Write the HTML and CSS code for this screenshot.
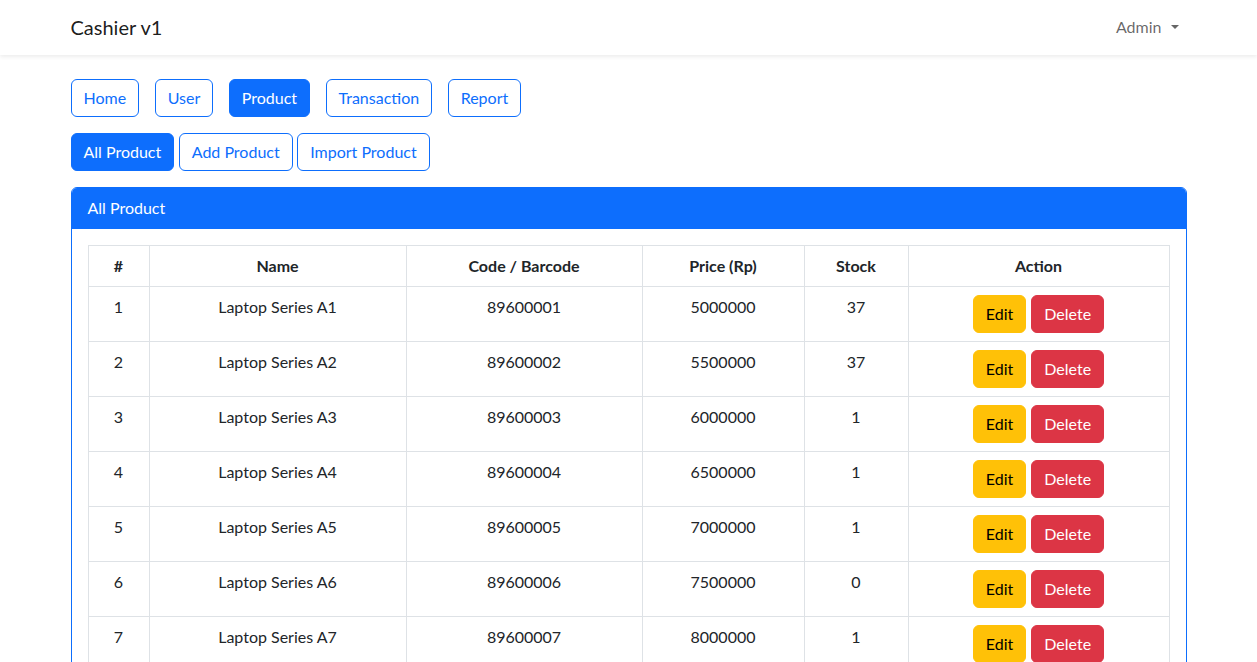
FILE: index.html
```html
<!DOCTYPE html>
<html>
<head>
<meta charset="utf-8">
<link rel="stylesheet" href="styles.css">
</head>
<body>
<nav class="navbar">
  <div class="container nav-inner">
    <a class="brand">Cashier v1</a>
    <a class="dropdown">Admin <span class="caret"></span></a>
  </div>
</nav>
<main class="container">
  <div class="menu">
    <a class="btn outline">Home</a>
    <a class="btn outline">User</a>
    <a class="btn solid">Product</a>
    <a class="btn outline">Transaction</a>
    <a class="btn outline">Report</a>
  </div>
  <div class="submenu">
    <a class="btn solid">All Product</a>
    <a class="btn outline">Add Product</a>
    <a class="btn outline">Import Product</a>
  </div>
  <div class="card">
    <div class="card-header">All Product</div>
    <div class="card-body">
      <table class="table">
        <colgroup>
          <col class="c1"><col class="c2"><col class="c3"><col class="c4"><col class="c5"><col class="c6">
        </colgroup>
        <thead>
          <tr><th>#</th><th>Name</th><th>Code / Barcode</th><th>Price (Rp)</th><th>Stock</th><th>Action</th></tr>
        </thead>
        <tbody>
          <tr><td>1</td><td>Laptop Series A1</td><td>89600001</td><td>5000000</td><td>37</td><td><div class="actions"><a class="btn warn">Edit</a><a class="btn danger">Delete</a></div></td></tr>
          <tr><td>2</td><td>Laptop Series A2</td><td>89600002</td><td>5500000</td><td>37</td><td><div class="actions"><a class="btn warn">Edit</a><a class="btn danger">Delete</a></div></td></tr>
          <tr><td>3</td><td>Laptop Series A3</td><td>89600003</td><td>6000000</td><td>1</td><td><div class="actions"><a class="btn warn">Edit</a><a class="btn danger">Delete</a></div></td></tr>
          <tr><td>4</td><td>Laptop Series A4</td><td>89600004</td><td>6500000</td><td>1</td><td><div class="actions"><a class="btn warn">Edit</a><a class="btn danger">Delete</a></div></td></tr>
          <tr><td>5</td><td>Laptop Series A5</td><td>89600005</td><td>7000000</td><td>1</td><td><div class="actions"><a class="btn warn">Edit</a><a class="btn danger">Delete</a></div></td></tr>
          <tr><td>6</td><td>Laptop Series A6</td><td>89600006</td><td>7500000</td><td>0</td><td><div class="actions"><a class="btn warn">Edit</a><a class="btn danger">Delete</a></div></td></tr>
          <tr><td>7</td><td>Laptop Series A7</td><td>89600007</td><td>8000000</td><td>1</td><td><div class="actions"><a class="btn warn">Edit</a><a class="btn danger">Delete</a></div></td></tr>
        </tbody>
      </table>
    </div>
  </div>
</main>
</body>
</html>
```
FILE: styles.css
```css
* { box-sizing: border-box; }
html, body { margin: 0; }
body {
  font-family: Lato, "Noto Sans", sans-serif;
  font-size: 16px;
  line-height: 24px;
  color: #212529;
  background: #fff;
}
.container {
  width: 1140px;
  margin: 0 auto;
  padding: 0 12px;
}
.navbar {
  height: 55px;
  background: #fff;
  box-shadow: 0 2px 4px rgba(0,0,0,0.075);
}
.nav-inner {
  height: 55px;
  padding-bottom: 2px;
  display: flex;
  align-items: center;
  justify-content: space-between;
}
.brand {
  font-size: 20px;
  line-height: 30px;
  color: rgba(0,0,0,0.9);
}
.dropdown {
  color: rgba(0,0,0,0.6);
  padding-right: 8px;
  display: flex;
  align-items: center;
}
.caret {
  display: inline-block;
  margin-left: 9px;
  border-top: 4px solid rgba(0,0,0,0.6);
  border-left: 4px solid transparent;
  border-right: 4px solid transparent;
}
.menu {
  margin-top: 24px;
  display: flex;
  gap: 15.5px;
}
.submenu {
  margin-top: 16px;
  display: flex;
  gap: 4.5px;
}
.btn {
  display: inline-block;
  height: 38px;
  padding: 6px 12px;
  border: 1px solid transparent;
  border-radius: 6px;
  font-size: 16px;
  line-height: 24px;
  text-align: center;
  white-space: nowrap;
}
.outline { color: #0d6efd; border-color: #0d6efd; background: #fff; }
.solid { color: #fff; background: #0d6efd; border-color: #0d6efd; }
.warn { color: #000; background: #ffc107; border-color: #ffc107; }
.danger { color: #fff; background: #dc3545; border-color: #dc3545; }
.card {
  margin-top: 16px;
  border: 1px solid #0d6efd;
  border-radius: 6px;
  overflow: hidden;
}
.card-header {
  background: #0d6efd;
  color: #fff;
  height: 41px;
  padding: 8px 16px;
}
.card-body { padding: 16px; }
.table {
  width: 100%;
  border-collapse: collapse;
  table-layout: fixed;
}
.c1 { width: 61px; }
.c2 { width: 257px; }
.c3 { width: 236px; }
.c4 { width: 162px; }
.c5 { width: 104px; }
.c6 { width: auto; }
.table th, .table td {
  border: 1px solid #dee2e6;
  padding: 8px;
  text-align: center;
  vertical-align: top;
}
.table th { font-weight: 700; height: 41px; }
.table td { height: 55px; }
.actions {
  display: flex;
  justify-content: center;
  gap: 5px;
}
```
